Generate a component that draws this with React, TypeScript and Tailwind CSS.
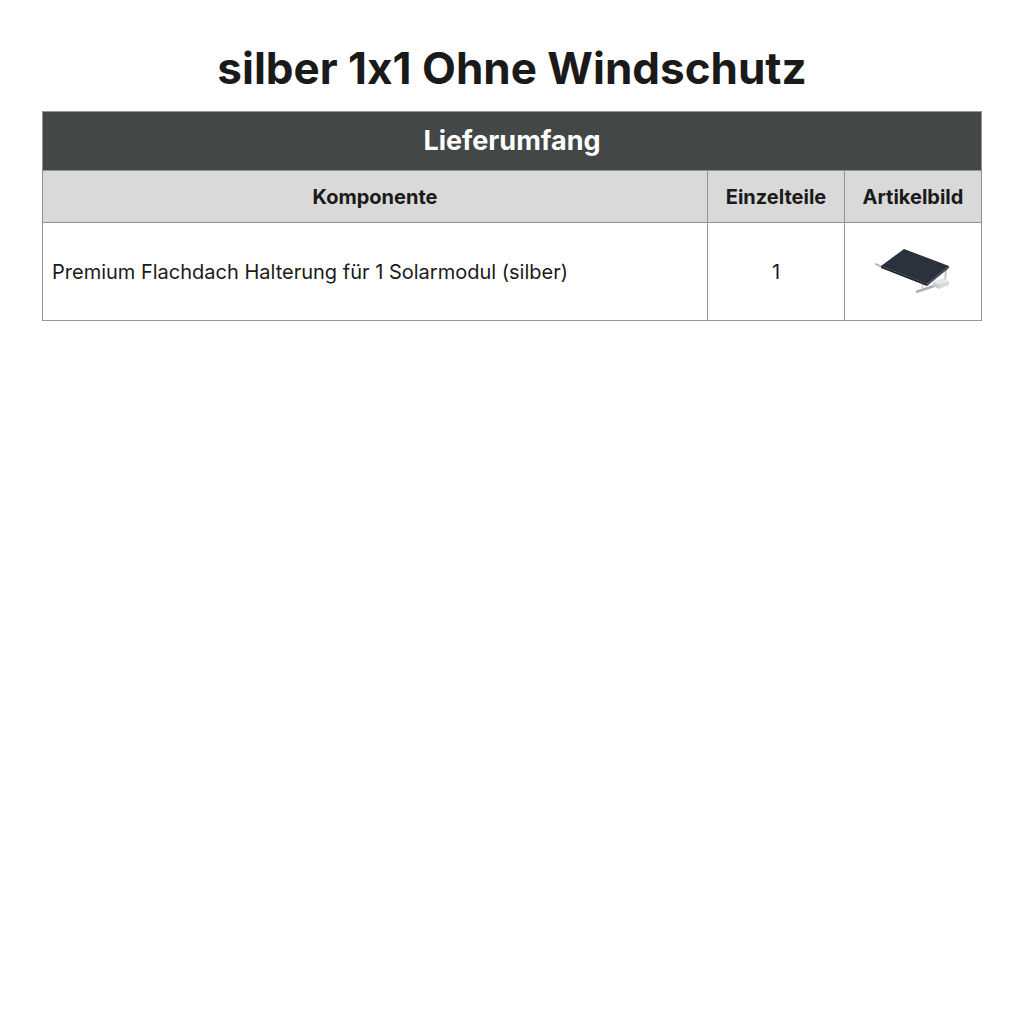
import React from 'react';

function PanelImage() {
  return (
    <svg width="76" height="50" viewBox="0 0 76 50" className="block mx-auto">
      <g transform="translate(0,-3)">
        {/* rails and legs */}
        <path d="M0 20 L8 23" stroke="#b4b9bd" strokeWidth="2" />
        <path d="M41 48 L68 39" stroke="#a9afb4" strokeWidth="2.5" />
        <path d="M47 46 L48 40" stroke="#c2c6c9" strokeWidth="1.5" />
        <path d="M70 37 L71 25" stroke="#c2c6c9" strokeWidth="2" />
        {/* panel */}
        <polygon points="6,22 29,5 74,22 52,40" fill="#2a303c" />
        <polygon points="6,22 52,40 52,42 6,24" fill="#1b1f27" />
        <polygon points="52,40 74,22 74,24 52,42" fill="#3b414d" />
        <g stroke="#3a4254" strokeWidth="0.4">
          <path d="M11.7 17.8 L57.5 35.5" />
          <path d="M17.5 13.5 L63 31" />
          <path d="M23.2 9.3 L68.5 26.5" />
          <path d="M17.2 26.4 L40 9.2" />
          <path d="M28.5 30.8 L51.2 13.4" />
          <path d="M40 35.4 L62.5 17.6" />
        </g>
        {/* junction box */}
        <polygon points="58,38 68,34 74,37 64,41" fill="#e6e8ea" />
        <polygon points="58,38 64,41 64,45 58,42" fill="#c8ccd0" />
        <polygon points="64,41 74,37 74,41 64,45" fill="#d8dbde" />
      </g>
    </svg>
  );
}

export default function App() {
  return (
    <div className="min-h-screen bg-white px-[42px] font-['Inter',sans-serif] text-[#1a1a1a] [font-feature-settings:'calt'_0]">
      <h1 className="pt-[41px] pb-[16px] text-center text-[44px] leading-[54px] font-bold">
        silber 1x1 Ohne Windschutz
      </h1>
      <table className="w-full border-collapse border border-[#949494]">
        <thead>
          <tr>
            <th
              colSpan={3}
              className="h-[59px] bg-[#434746] text-white text-[27px] font-bold text-center border border-[#949494]"
            >
              Lieferumfang
            </th>
          </tr>
          <tr className="bg-[#d9d9d9]">
            <th className="h-[52px] border border-[#949494] text-[20px] font-bold text-center">
              Komponente
            </th>
            <th className="w-[137px] border border-[#949494] text-[20px] font-bold text-center">
              Einzelteile
            </th>
            <th className="w-[137px] border border-[#949494] text-[20px] font-bold text-center">
              Artikelbild
            </th>
          </tr>
        </thead>
        <tbody>
          <tr>
            <td className="h-[98px] border border-[#949494] px-[9px] text-[20px] text-left">
              Premium Flachdach Halterung für 1 Solarmodul (silber)
            </td>
            <td className="border border-[#949494] text-[20px] text-center">1</td>
            <td className="border border-[#949494] text-center">
              <PanelImage />
            </td>
          </tr>
        </tbody>
      </table>
    </div>
  );
}
